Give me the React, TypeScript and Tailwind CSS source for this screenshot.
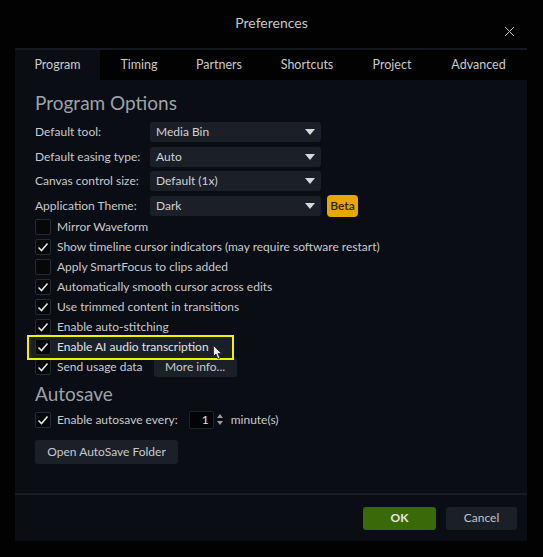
import { X } from "lucide-react";

const font = { fontFamily: "Lato, 'Open Sans', sans-serif" };

type SelectProps = { value: string };

function Select({ value }: SelectProps) {
  return (
    <div className="ml-auto flex h-[20px] w-[171px] items-center justify-between rounded-[3px] bg-[#1b2028] pl-[6px] pr-[6px] text-[12px] text-[#d0d2d4]">
      <span>{value}</span>
      <svg width="10" height="6" viewBox="0 0 10 6">
        <path d="M0 0 L10 0 L5 6 Z" fill="#d6d8da" />
      </svg>
    </div>
  );
}

function Check({ checked }: { checked: boolean }) {
  return (
    <div className="flex h-[16px] w-[16px] shrink-0 items-center justify-center rounded-[2px] border border-[#262a31] bg-[#050709]">
      {checked && (
        <svg width="12" height="12" viewBox="0 0 12 12">
          <path d="M1.5 6.5 L4.5 9.5 L10.5 2.5" fill="none" stroke="#e2e4e6" strokeWidth="1.6" />
        </svg>
      )}
    </div>
  );
}

const tabs = [
  { name: "Program", w: "w-[85px]" },
  { name: "Timing", w: "w-[78px]" },
  { name: "Partners", w: "w-[82px]" },
  { name: "Shortcuts", w: "w-[94px]" },
  { name: "Project", w: "w-[76px]" },
  { name: "Advanced", w: "w-[97px]" },
];

const selects = [
  { label: "Default tool:", value: "Media Bin" },
  { label: "Default easing type:", value: "Auto" },
  { label: "Canvas control size:", value: "Default (1x)" },
  { label: "Application Theme:", value: "Dark" },
];

const checks = [
  { label: "Mirror Waveform", checked: false },
  { label: "Show timeline cursor indicators (may require software restart)", checked: true },
  { label: "Apply SmartFocus to clips added", checked: false },
  { label: "Automatically smooth cursor across edits", checked: true },
  { label: "Use trimmed content in transitions", checked: true },
  { label: "Enable auto-stitching", checked: true },
];

export default function App() {
  return (
    <div className="relative h-[557px] w-[543px] overflow-hidden bg-[#020203]" style={font}>
      {/* title bar */}
      <div className="relative flex h-[48px] items-center justify-center pb-[4px]">
        <span className="text-[14px] text-[#c4c6c8]">Preferences</span>
        <X className="absolute right-[25px] top-[23px] text-[#c0c2c4]" size={17} strokeWidth={1.4} />
      </div>

      <div className="ml-[15px] flex h-[493px] w-[512px] flex-col border-t-[2px] border-[#15181e]">
        {/* tabs */}
        <div className="flex h-[30px] bg-[#020203] text-[12.5px] text-[#c8cacc]">
          {tabs.map((t, i) => (
            <div
              key={t.name}
              className={`${t.w} flex items-center justify-center ${i === 0 ? "bg-[#0a0d14]" : ""}`}
            >
              {t.name}
            </div>
          ))}
        </div>

        {/* content */}
        <div className="flex flex-1 flex-col bg-[#0a0d14]">
          <div className="flex-1 pl-[20px] text-[12px] text-[#c8cacc]">
            <div className="mt-[5px] mb-[1px] flex h-[36px] items-center text-[19px] text-[#9ea2a6]">
              Program Options
            </div>

            <div className="flex flex-col gap-[4.5px]">
              {selects.map((s, i) => (
                <div key={s.label} className="flex h-[20px] w-[286px] items-center">
                  <span>{s.label}</span>
                  <Select value={s.value} />
                  {i === 3 && (
                    <div className="absolute left-[327px] flex h-[22px] w-[31px] items-center justify-center rounded-[4px] bg-[#e7a600] text-[12px] font-semibold text-[#2a2000]">
                      Beta
                    </div>
                  )}
                </div>
              ))}
            </div>

            <div className="mt-[1px]">
              {checks.map((c) => (
                <div key={c.label} className="flex h-[20px] items-center gap-[6px]">
                  <Check checked={c.checked} />
                  <span>{c.label}</span>
                </div>
              ))}

              <div className="relative flex h-[20px] items-center gap-[6px]">
                <div className="absolute -left-[8px] -top-[2px] h-[25px] w-[207px] border-[2px] border-[#f2f200] bg-[#1b2028]" />
                <div className="relative flex items-center gap-[6px]">
                  <Check checked />
                  <span className="text-[#e0e2e4]">Enable AI audio transcription</span>
                </div>
                <svg className="absolute left-[178px] top-[8px]" width="10" height="15" viewBox="0 0 10 15">
                  <path d="M0.5 0.5 L0.5 11.5 L3 9 L5 14 L7 13 L5 8.5 L8.5 8.5 Z" fill="#e8e8e8" stroke="#222" strokeWidth="0.8" />
                </svg>
              </div>

              <div className="flex h-[20px] items-center gap-[6px]">
                <Check checked />
                <span>Send usage data</span>
                <div className="ml-[5px] flex h-[20px] w-[83px] items-center justify-center rounded-[3px] bg-[#1b2028]">
                  More info...
                </div>
              </div>
            </div>

            <div className="mt-[3px] flex h-[30px] items-center text-[19px] text-[#9ea2a6]">Autosave</div>

            <div className="flex h-[20px] items-center gap-[6px]">
              <Check checked />
              <span>Enable autosave every:</span>
              <div className="ml-[5px] flex h-[18px] w-[25px] items-center justify-end rounded-[2px] border border-[#1e2229] bg-[#020304] pr-[4px] text-[#e0e2e4]">
                1
              </div>
              <div className="-ml-[3px] flex flex-col gap-[3px]">
                <svg width="6" height="4" viewBox="0 0 6 4">
                  <path d="M0 4 L6 4 L3 0 Z" fill="#9a9ea2" />
                </svg>
                <svg width="6" height="4" viewBox="0 0 6 4">
                  <path d="M0 0 L6 0 L3 4 Z" fill="#9a9ea2" />
                </svg>
              </div>
              <span className="ml-[2px]">minute(s)</span>
            </div>

            <div className="mt-[10px] flex h-[24px] w-[143px] items-center justify-center rounded-[3px] bg-[#1b2028]">
              Open AutoSave Folder
            </div>
          </div>

          {/* footer */}
          <div className="flex h-[48px] items-center justify-end gap-[10px] border-t-[2px] border-[#171b22] pr-[10px] text-[12px]">
            <div className="flex h-[23px] w-[73px] items-center justify-center rounded-[3px] bg-[#3a6a08] font-bold text-[#e6e8e0]">
              OK
            </div>
            <div className="flex h-[23px] w-[71px] items-center justify-center rounded-[3px] bg-[#1b2028] text-[#c0c2c4]">
              Cancel
            </div>
          </div>
        </div>
      </div>
    </div>
  );
}
